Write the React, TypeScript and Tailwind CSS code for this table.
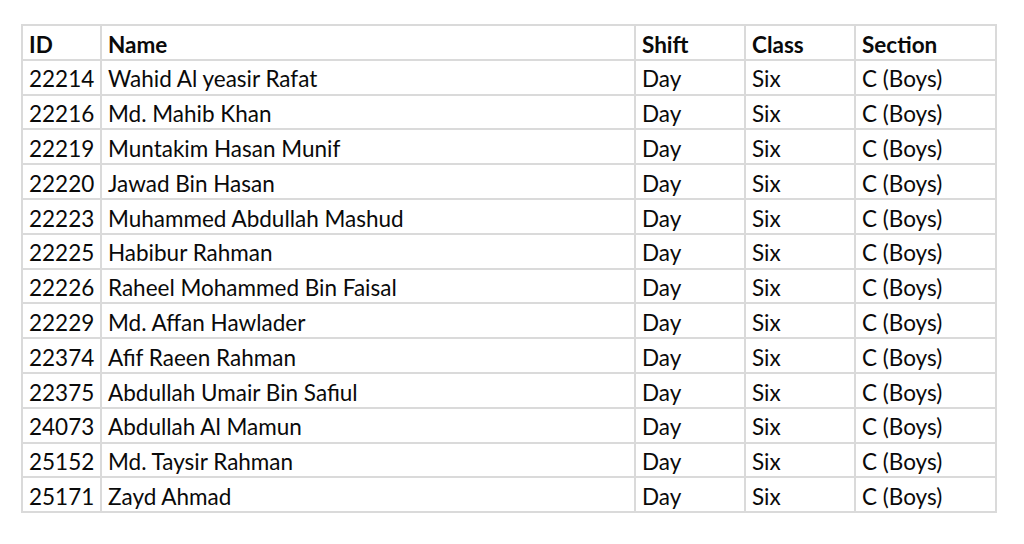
import React from "react";

const rows: [string, string][] = [
  ["22214", "Wahid Al yeasir Rafat"],
  ["22216", "Md. Mahib Khan"],
  ["22219", "Muntakim Hasan Munif"],
  ["22220", "Jawad Bin Hasan"],
  ["22223", "Muhammed Abdullah Mashud"],
  ["22225", "Habibur Rahman"],
  ["22226", "Raheel Mohammed Bin Faisal"],
  ["22229", "Md. Affan Hawlader"],
  ["22374", "Afif Raeen Rahman"],
  ["22375", "Abdullah Umair Bin Safiul"],
  ["24073", "Abdullah Al Mamun"],
  ["25152", "Md. Taysir Rahman"],
  ["25171", "Zayd Ahmad"],
];

export default function App() {
  const cell = "border-2 border-[#dadada] h-[34.8px] px-[6px] pt-[5px] leading-none align-middle";
  return (
    <div
      className="w-[1024px] h-[544px] bg-white pt-[24px] pl-[21px] text-[#0a0a0a]"
      style={{ fontFamily: "Lato, 'Open Sans', sans-serif" }}
    >
      <table className="border-collapse text-[22.5px] table-fixed w-[974px]">
        <colgroup>
          <col className="w-[79px]" />
          <col className="w-[534px]" />
          <col className="w-[110px]" />
          <col className="w-[110px]" />
          <col className="w-[141px]" />
        </colgroup>
        <thead>
          <tr>
            {["ID", "Name", "Shift", "Class", "Section"].map((h) => (
              <th key={h} className={`${cell} text-left font-bold`}>
                {h}
              </th>
            ))}
          </tr>
        </thead>
        <tbody>
          {rows.map(([id, name]) => (
            <tr key={id}>
              <td className={`${cell} text-right`}>{id}</td>
              <td className={`${cell} text-left`}>{name}</td>
              <td className={cell}>Day</td>
              <td className={cell}>Six</td>
              <td className={cell}>C (Boys)</td>
            </tr>
          ))}
        </tbody>
      </table>
    </div>
  );
}
